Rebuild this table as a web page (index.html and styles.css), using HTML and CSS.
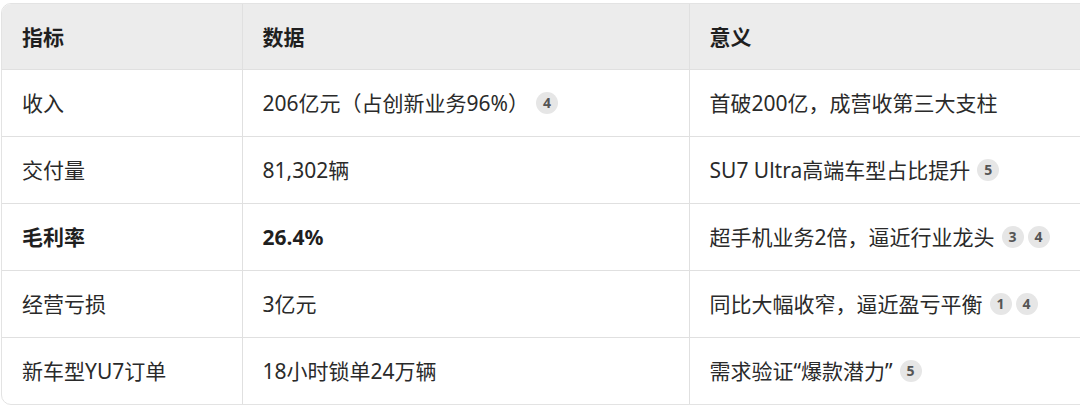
FILE: index.html
```html
<!DOCTYPE html>
<html lang="zh">
<head>
<meta charset="utf-8">
<link rel="stylesheet" href="styles.css">
</head>
<body>
<div class="wrap">
  <table class="tbl">
    <colgroup><col class="c1"><col class="c2"><col class="c3"></colgroup>
    <thead>
      <tr><th>指标</th><th>数据</th><th>意义</th></tr>
    </thead>
    <tbody>
      <tr><td>收入</td><td>206亿元（占创新业务96%）<span class="refs"><span class="badge">4</span></span></td><td>首破200亿，成营收第三大支柱</td></tr>
      <tr><td>交付量</td><td>81,302辆</td><td>SU7 Ultra高端车型占比提升<span class="refs"><span class="badge">5</span></span></td></tr>
      <tr><td><b>毛利率</b></td><td><b>26.4%</b></td><td>超手机业务2倍，逼近行业龙头<span class="refs"><span class="badge">3</span><span class="badge">4</span></span></td></tr>
      <tr><td>经营亏损</td><td>3亿元</td><td>同比大幅收窄，逼近盈亏平衡<span class="refs"><span class="badge">1</span><span class="badge">4</span></span></td></tr>
      <tr><td>新车型YU7订单</td><td>18小时锁单24万辆</td><td>需求验证“爆款潜力”<span class="refs"><span class="badge">5</span></span></td></tr>
    </tbody>
  </table>
</div>
</body>
</html>
```
FILE: styles.css
```css
html, body {
  margin: 0;
  padding: 0;
  background: #ffffff;
  overflow: hidden;
}
body {
  font-family: "Noto Sans", "Noto Sans CJK SC", sans-serif;
  color: #2a2a2a;
  font-size: 21px;
}
.wrap {
  margin: 3px 0 0 1px;
  width: 1110px;
  border: 1px solid #e3e3e3;
  border-radius: 10px;
  overflow: hidden;
}
.tbl {
  width: 100%;
  border-collapse: collapse;
  table-layout: fixed;
}
.c1 { width: 240px; }
.c2 { width: 447px; }
.tbl th, .tbl td {
  text-align: left;
  padding: 0 20px;
  vertical-align: middle;
  border-right: 1px solid #e0e0e0;
  border-bottom: 1px solid #e0e0e0;
  white-space: nowrap;
  line-height: 28px;
}
.tbl th {
  height: 65px;
  background: #ececec;
  font-weight: 700;
  color: #1f1f1f;
}
.tbl td {
  height: 66px;
}
.tbl tbody tr:last-child td { border-bottom: none; }
.tbl th:last-child, .tbl td:last-child { border-right: none; }
.tbl b { font-weight: 700; color: #1f1f1f; }
.refs {
  display: inline-flex;
  gap: 4px;
  margin-left: 7px;
  vertical-align: middle;
  position: relative;
  top: -2px;
}
.badge {
  display: inline-flex;
  align-items: center;
  justify-content: center;
  width: 22px;
  height: 22px;
  border-radius: 50%;
  background: #e6e6e6;
  color: #555;
  font-size: 14px;
  font-weight: 700;
  font-family: "Noto Sans", sans-serif;
  line-height: 1;
}
```
